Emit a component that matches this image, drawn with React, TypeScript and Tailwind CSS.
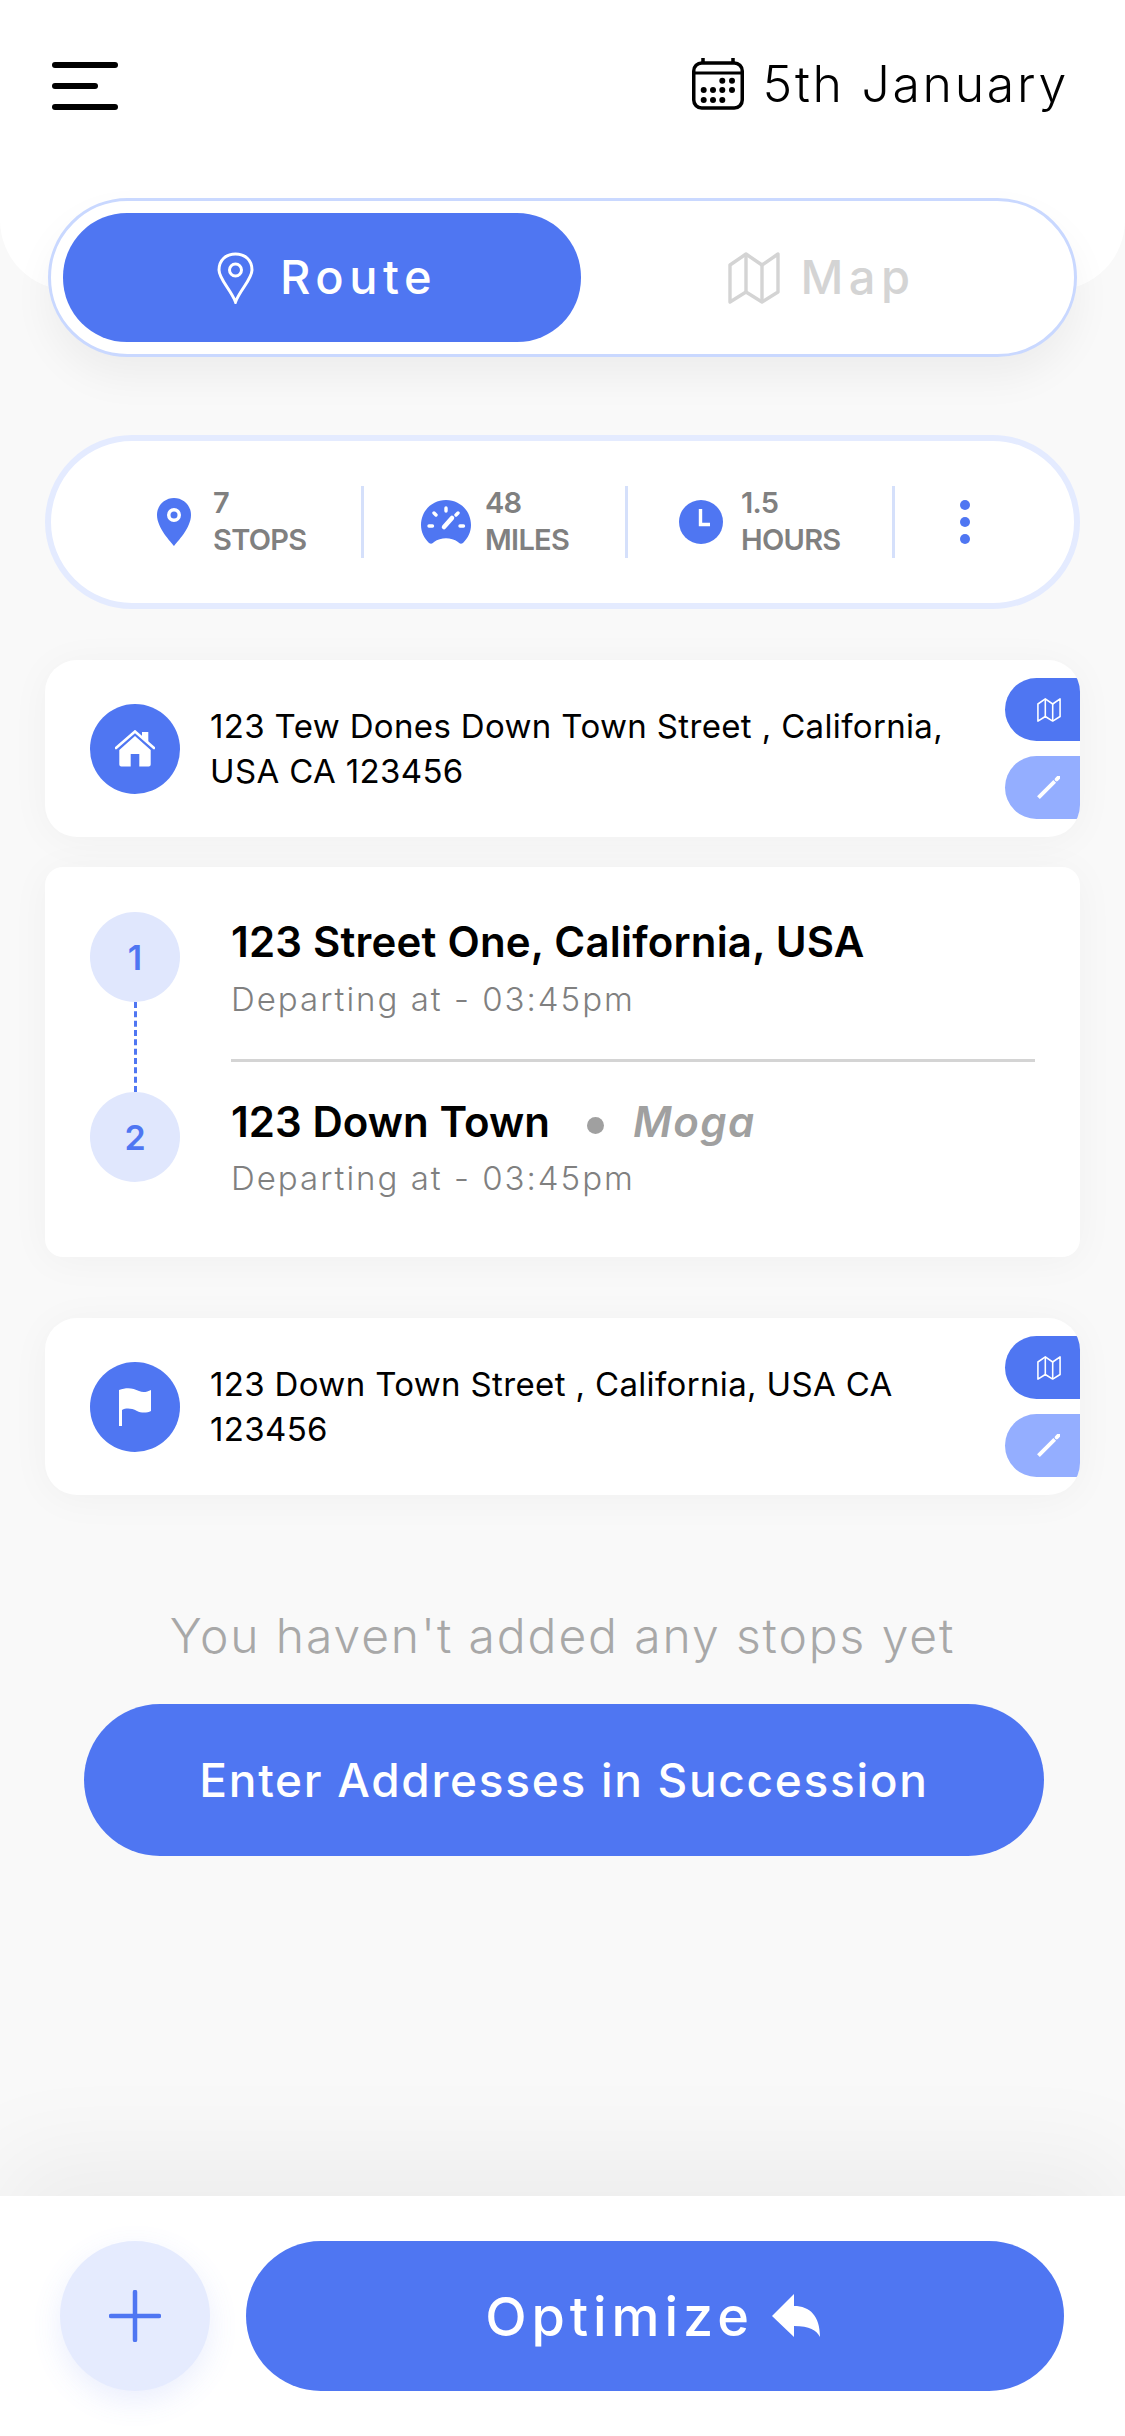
import React from 'react';

const font = { fontFamily: 'Inter, "Noto Sans", sans-serif' };

const MapIcon = ({ className }: { className?: string }) => (
  <svg viewBox="0 0 52 52" fill="none" stroke="currentColor" strokeWidth="3.4" strokeLinejoin="round" className={className}>
    <path d="M2 13 L18 2 L34 13 L50 2 V40 L34 50 L18 40 L2 50 Z" />
    <path d="M18 2 V40 M34 13 V50" />
  </svg>
);

const PencilIcon = ({ className }: { className?: string }) => (
  <svg viewBox="0 0 24 24" className={className} fill="none" stroke="white" strokeWidth="4">
    <path d="M1.5 22.5 L18.5 5.5" />
    <path d="M20.5 3.5 L22.5 1.5" strokeLinecap="round" />
  </svg>
);

const SideButtons = () => (
  <div className="absolute right-0 top-[18px] flex flex-col gap-[15px]">
    <div className="w-[75px] h-[63px] bg-[#4f76f2] rounded-l-[32px] flex items-center pl-[32px] text-white">
      <MapIcon className="w-[24px] h-[24px]" />
    </div>
    <div className="w-[75px] h-[63px] bg-[#94aeff] rounded-l-[32px] flex items-center pl-[32px]">
      <PencilIcon className="w-[23px] h-[23px]" />
    </div>
  </div>
);

const AddressCard = ({ icon, children }: { icon: React.ReactNode; children: React.ReactNode }) => (
  <div className="relative mx-[45px] w-[1035px] h-[177px] bg-white rounded-[32px] overflow-hidden shadow-[0_4px_40px_rgba(0,0,0,0.04)] flex items-center pl-[45px]">
    <div className="w-[90px] h-[90px] rounded-full bg-[#4f76f2] flex items-center justify-center shrink-0">{icon}</div>
    <p className="ml-[30px] w-[760px] text-[33px] leading-[45px] tracking-[0.35px] text-black">{children}</p>
    <SideButtons />
  </div>
);

const Stat = ({ icon, value, label, className }: { icon: React.ReactNode; value: string; label: string; className: string }) => (
  <div className={`flex items-center ${className}`}>
    {icon}
    <div className="text-[29px] leading-[37px] font-semibold text-[#808080] tracking-[-0.7px] mt-[-2px]">
      <div>{value}</div>
      <div>{label}</div>
    </div>
  </div>
);

export default function App() {
  return (
    <div className="w-[1125px] h-[2436px] bg-[#f9f9f9] flex flex-col overflow-hidden" style={font}>
      <header className="h-[290px] bg-white rounded-b-[70px] px-[52px] pt-[58px] flex justify-between items-start shrink-0">
        <div className="mt-[4px] flex flex-col gap-[15px]">
          <div className="w-[66px] h-[6px] rounded-full bg-black" />
          <div className="w-[46px] h-[6px] rounded-full bg-black" />
          <div className="w-[66px] h-[6px] rounded-full bg-black" />
        </div>
        <div className="flex items-center mr-[4px]">
          <svg viewBox="0 0 52 52" className="w-[52px] h-[52px]" fill="none" stroke="black">
            <rect x="1.75" y="5" width="48.5" height="45" rx="8" strokeWidth="3.5" />
            <path d="M1.75 15 H50.25" strokeWidth="3" />
            <path d="M11 0 V6 M41 0 V6" strokeWidth="3.5" />
            <g fill="black" stroke="none">
              <circle cx="30.3" cy="22.7" r="3" /><circle cx="40" cy="22.7" r="3" />
              <circle cx="11.7" cy="32" r="3" /><circle cx="21" cy="32" r="3" /><circle cx="30.3" cy="32" r="3" /><circle cx="40" cy="32" r="3" />
              <circle cx="11.7" cy="42" r="3" /><circle cx="21" cy="42" r="3" /><circle cx="30.3" cy="42" r="3" />
            </g>
          </svg>
          <span className="ml-[19px] text-[50px] leading-[52px] font-light tracking-[2.7px] text-black">5th January</span>
        </div>
      </header>

      {/* toggle hangs over the bottom of the header */}
      <div className="-mt-[92px] mx-[48px] h-[159px] rounded-[80px] border-[3px] border-[#c9d8ff] bg-white p-[12px] flex shadow-[0_20px_40px_rgba(0,0,0,0.05)] shrink-0">
        <div className="w-[518px] h-[129px] rounded-[64px] bg-[#4f76f2] flex items-center justify-center gap-[26px] pl-[10px] text-white">
          <svg viewBox="0 0 37 52" fill="none" stroke="currentColor" strokeWidth="3" className="w-[37px] h-[52px]">
            <path d="M18.5 50 C14 38 2 27 2 18 C2 8 9 2 18.5 2 C28 2 35 8 35 18 C35 27 23 38 18.5 50 Z" />
            <circle cx="18.5" cy="18" r="6" />
          </svg>
          <span className="text-[47px] font-medium tracking-[5.5px]">Route</span>
        </div>
        <div className="flex-1 flex items-center justify-center gap-[20px] text-[#d4d4d4] pl-[1px]">
          <MapIcon className="w-[52px] h-[52px]" />
          <span className="text-[47px] font-medium tracking-[5.5px]">Map</span>
        </div>
      </div>

      <div className="mt-[78px] mx-[45px] h-[174px] rounded-[87px] border-[6px] border-[#e4ebff] bg-white flex items-center shrink-0 relative">
        <Stat
          className="ml-[106px] w-[204px] gap-[22px]"
          value="7"
          label="STOPS"
          icon={
            <svg viewBox="0 0 34 48" className="w-[34px] h-[48px]">
              <path fill="#4f76f2" fillRule="evenodd" d="M17 48 C14 44 0 30 0 17 C0 7 8 0 17 0 C26 0 34 7 34 17 C34 30 20 44 17 48 Z M17 10 A7 7 0 1 0 17 24 A7 7 0 1 0 17 10 Z" />
              <circle cx="17" cy="17" r="3.5" fill="#4f76f2" />
            </svg>
          }
        />
        <div className="w-[3px] h-[72px] bg-[#d5e0fb]" />
        <Stat
          className="ml-[57px] w-[204px] gap-[14px]"
          value="48"
          label="MILES"
          icon={
            <svg viewBox="0 0 50 44" className="w-[50px] h-[44px]">
              <path fill="#4f76f2" d="M25 0 C11 0 0 11 0 25 C0 32 3 38 8 43 C10 44 11 44 13 42 C20 37 30 37 37 42 C39 44 40 44 42 43 C47 38 50 32 50 25 C50 11 39 0 25 0 Z" />
              <g stroke="white" strokeWidth="3.4" strokeLinecap="round">
                <path d="M25 8 V11 M13 13 L15 15 M37 13 L35 15 M8 26 H11.5 M39 26 H42.5" />
                <path d="M23 27 L31 18" strokeWidth="4.5" />
              </g>
            </svg>
          }
        />
        <div className="w-[3px] h-[72px] bg-[#d5e0fb]" />
        <Stat
          className="ml-[51px] w-[213px] gap-[18px]"
          value="1.5"
          label="HOURS"
          icon={
            <svg viewBox="0 0 44 44" className="w-[44px] h-[44px]">
              <circle cx="22" cy="22" r="22" fill="#4f76f2" />
              <path d="M21.5 9 V24.5 H31" fill="none" stroke="white" strokeWidth="3.4" />
            </svg>
          }
        />
        <div className="w-[3px] h-[72px] bg-[#d5e0fb]" />
        <div className="ml-[65px] flex flex-col gap-[7px]">
          <div className="w-[10px] h-[10px] rounded-full bg-[#4f76f2]" />
          <div className="w-[10px] h-[10px] rounded-full bg-[#4f76f2]" />
          <div className="w-[10px] h-[10px] rounded-full bg-[#4f76f2]" />
        </div>
      </div>

      <div className="mt-[51px] shrink-0">
        <AddressCard
          icon={
            <svg viewBox="0 0 40 37" className="w-[40px] h-[37px]" fill="white">
              <path d="M27 2 H33.3 V13 L27 7.5 Z" />
              <path d="M1 18 L20 1.5 L39 18" fill="none" stroke="white" strokeWidth="2.6" strokeLinecap="round" />
              <path d="M4.3 20 L20 6 L35.7 20 V34.5 A2 2 0 0 1 33.7 36.5 H24.3 V24 H15.7 V36.5 H6.3 A2 2 0 0 1 4.3 34.5 Z" />
            </svg>
          }
        >
          123 Tew Dones Down Town Street , California, USA CA 123456
        </AddressCard>
      </div>

      <div className="mt-[30px] mx-[45px] w-[1035px] h-[390px] bg-white rounded-[18px] shadow-[0_4px_40px_rgba(0,0,0,0.04)] pl-[45px] pr-[45px] pt-[45px] flex shrink-0">
        <div className="w-[90px] flex flex-col items-center shrink-0">
          <div className="w-[90px] h-[90px] rounded-full bg-[#e0e7fd] flex items-center justify-center text-[34px] font-semibold text-[#4f76f2]">1</div>
          <div className="h-[90px] border-l-[3px] border-dashed border-[#4f76f2]" />
          <div className="w-[90px] h-[90px] rounded-full bg-[#e0e7fd] flex items-center justify-center text-[34px] font-semibold text-[#4f76f2]">2</div>
        </div>
        <div className="ml-[51px] flex-1">
          <div className="text-[42px] leading-[56px] font-semibold text-black mt-[2px] tracking-[0.2px]">123 Street One, California, USA</div>
          <div className="text-[33px] leading-[44px] font-light text-[#808080] mt-[7px] tracking-[2px]">Departing at - 03:45pm</div>
          <div className="h-[3px] bg-[#d4d4d4] mt-[38px]" />
          <div className="flex items-center mt-[32px]">
            <span className="text-[42px] leading-[56px] font-semibold text-black tracking-[0.05px]">123 Down Town</span>
            <span className="w-[17px] h-[17px] rounded-full bg-[#a0a0a0] ml-[37px] mt-[6px]" />
            <span className="text-[42px] leading-[56px] font-semibold italic text-[#a0a0a0] ml-[29px] tracking-[1.5px]">Moga</span>
          </div>
          <div className="text-[33px] leading-[44px] font-light text-[#808080] mt-[6px] tracking-[2px]">Departing at - 03:45pm</div>
        </div>
      </div>

      <div className="mt-[61px] shrink-0">
        <AddressCard
          icon={
            <svg viewBox="0 0 32 38" className="w-[32px] h-[38px]" fill="white">
              <path d="M0 2 C8 -1 14 0 20 3 C24 5 28 4 32 2 V23 C28 25 22 25 18 23 C12 20 7 20 3 22 V38 H0 Z" />
            </svg>
          }
        >
          123 Down Town Street , California, USA CA 123456
        </AddressCard>
      </div>

      <p className="mt-[111px] text-center text-[48px] leading-[60px] font-light text-[#a8a8a8] tracking-[1.9px] shrink-0">You haven't added any stops yet</p>

      <div className="mt-[38px] ml-[84px] w-[960px] h-[152px] rounded-[76px] bg-[#4f76f2] flex items-center justify-center text-white text-[46px] font-medium tracking-[1.7px] shrink-0">
        Enter Addresses in Succession
      </div>

      <div className="flex-1" />

      <footer className="relative h-[240px] bg-white shrink-0 shadow-[0_-40px_100px_rgba(0,0,0,0.05)] pt-[45px] pl-[60px] flex gap-[36px]">
        <div className="w-[150px] h-[150px] rounded-full bg-[#e5ebfe] shadow-[0_10px_30px_rgba(79,118,242,0.12)] flex items-center justify-center">
          <svg viewBox="0 0 52 52" className="w-[52px] h-[52px]" fill="none" stroke="#4f76f2" strokeWidth="4.5" strokeLinecap="round">
            <path d="M26 2 V50 M2 26 H50" />
          </svg>
        </div>
        <div className="w-[818px] h-[150px] rounded-[75px] bg-[#4f76f2] flex items-center justify-center gap-[18px] pr-[5px] text-white">
          <span className="text-[54px] font-medium tracking-[4.9px]">Optimize</span>
          <svg viewBox="0 0 48 44" className="w-[48px] h-[44px]" fill="white">
            <path d="M22 0 V12 C38 12 48 22 48 43 C44 36 38 32 22 32 V43 L0 22 Z" />
          </svg>
        </div>
      </footer>
    </div>
  );
}
